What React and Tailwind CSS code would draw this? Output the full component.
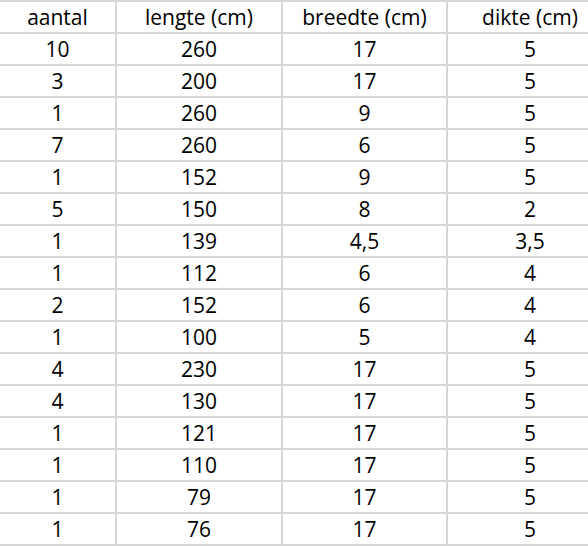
import React from 'react';

const header = ['aantal', 'lengte (cm)', 'breedte (cm)', 'dikte (cm)'];

const rows = [
  ['10', '260', '17', '5'],
  ['3', '200', '17', '5'],
  ['1', '260', '9', '5'],
  ['7', '260', '6', '5'],
  ['1', '152', '9', '5'],
  ['5', '150', '8', '2'],
  ['1', '139', '4,5', '3,5'],
  ['1', '112', '6', '4'],
  ['2', '152', '6', '4'],
  ['1', '100', '5', '4'],
  ['4', '230', '17', '5'],
  ['4', '130', '17', '5'],
  ['1', '121', '17', '5'],
  ['1', '110', '17', '5'],
  ['1', '79', '17', '5'],
  ['1', '76', '17', '5'],
];

const Row = ({ cells, last }) => (
  <div
    className={`grid grid-cols-[115px_166px_165px_166px] border-t-2 border-[#d6d6d6] ${last ? 'h-[34px] border-b-2' : 'h-[32px]'}`}
  >
    {cells.map((c, i) => (
      <div
        key={i}
        className={`flex items-center justify-center pt-[1px] ${i > 0 ? 'border-l-2 border-[#d6d6d6]' : ''}`}
      >
        {c}
      </div>
    ))}
  </div>
);

export default function App() {
  return (
    <div
      className="w-[588px] h-[546px] overflow-hidden bg-white text-[21px] text-black leading-none"
      style={{ fontFamily: '"Open Sans", sans-serif' }}
    >
      <div className="w-[612px]">
        <Row cells={header} />
        {rows.map((r, i) => (
          <Row key={i} cells={r} last={i === rows.length - 1} />
        ))}
      </div>
    </div>
  );
}
